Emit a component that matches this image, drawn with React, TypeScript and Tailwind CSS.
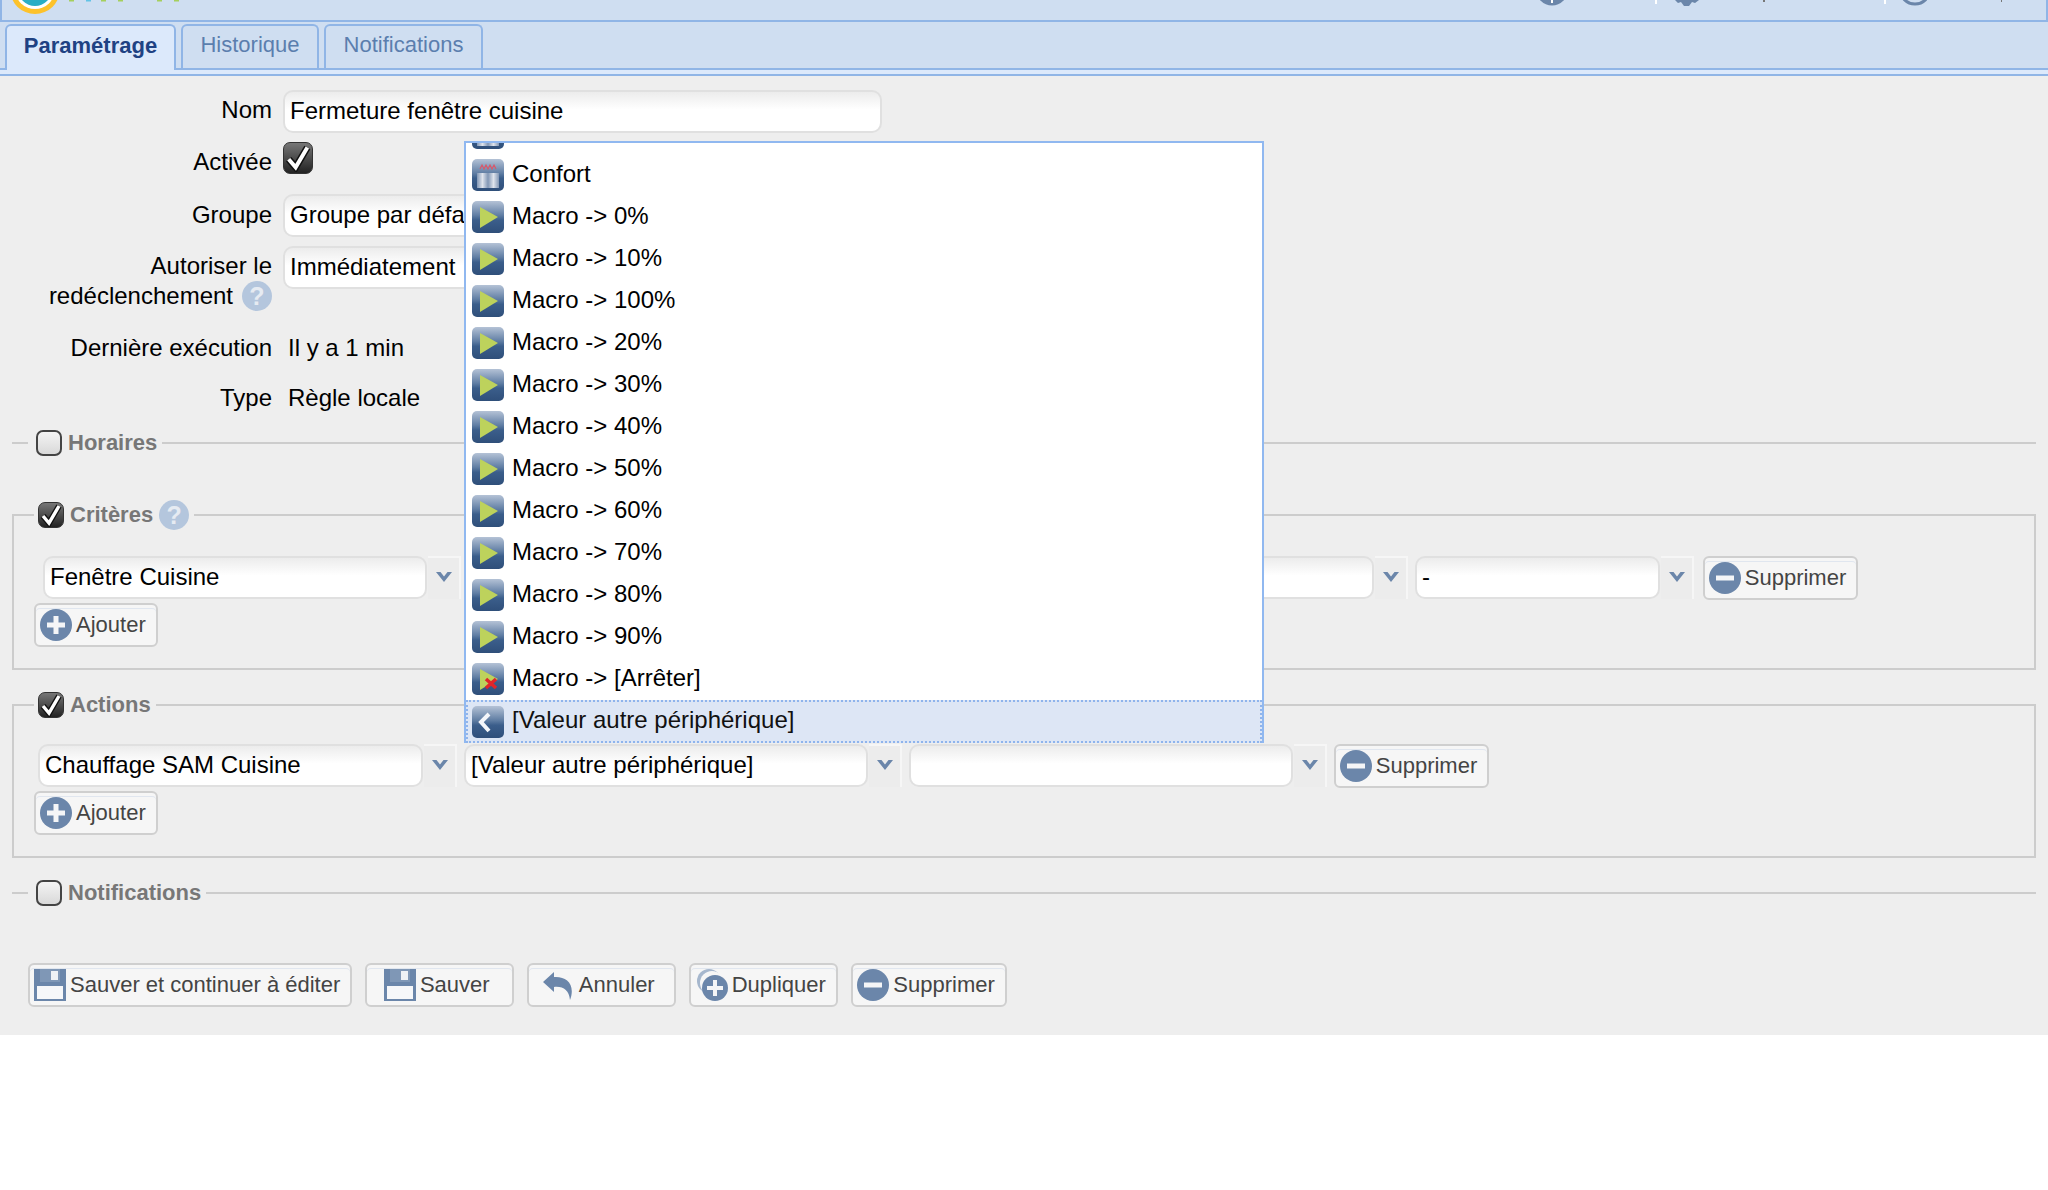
import { ReactNode, useId } from 'react';

const macroValues = ['0%', '10%', '100%', '20%', '30%', '40%', '50%', '60%', '70%', '80%', '90%'];

function TileIcon({ children }: { children?: ReactNode }) {
  const id = useId();
  return (
    <svg width="32" height="32" viewBox="0 0 32 32" className="shrink-0">
      <defs>
        <linearGradient id={id} x1="0" y1="0" x2="0" y2="1">
          <stop offset="0" stopColor="#b4c2d6" />
          <stop offset="0.45" stopColor="#5f7da3" />
          <stop offset="0.6" stopColor="#3b5e8b" />
          <stop offset="1" stopColor="#2f4f7a" />
        </linearGradient>
      </defs>
      <rect width="32" height="32" rx="5" fill={`url(#${id})`} />
      {children}
    </svg>
  );
}

function PlayIcon() {
  return (
    <TileIcon>
      <path d="M8 6 L26 16 L8 27 Z" fill="#bdd25c" />
    </TileIcon>
  );
}

function StopIcon() {
  return (
    <TileIcon>
      <path d="M8 6 L26 16 L8 27 Z" fill="#bdd25c" />
      <path d="M14 16 L24 25 M24 16 L14 25" stroke="#e0262a" strokeWidth="3.5" />
    </TileIcon>
  );
}

function BackIcon() {
  return (
    <TileIcon>
      <path d="M17 8 L9 16 L17 25" fill="none" stroke="#f4f6fa" strokeWidth="4" />
    </TileIcon>
  );
}

function ComfortIcon() {
  const id = useId();
  return (
    <TileIcon>
      <defs>
        <linearGradient id={id} x1="0" y1="0" x2="1" y2="0">
          <stop offset="0" stopColor="#8297b5" />
          <stop offset="0.25" stopColor="#dfe4ec" />
          <stop offset="0.5" stopColor="#8297b5" />
          <stop offset="0.75" stopColor="#dfe4ec" />
          <stop offset="1" stopColor="#8297b5" />
        </linearGradient>
      </defs>
      <path d="M8 10 L10 6 L12 10 L14 6 L16 10 L18 6 L20 10 L22 6 L24 10" fill="none" stroke="#d8586a" strokeWidth="1.2" />
      <rect x="5" y="14" width="22" height="15" fill={`url(#${id})`} />
    </TileIcon>
  );
}

function SaveIcon() {
  return (
    <svg width="32" height="32" viewBox="0 0 32 32" className="shrink-0">
      <rect width="32" height="32" fill="#6b86aa" />
      <rect x="6" y="0" width="20" height="13" fill="#7f97b6" />
      <rect x="17" y="2" width="7" height="9" fill="#eef1f5" />
      <rect x="3" y="17" width="26" height="13" fill="#f6f7f9" />
    </svg>
  );
}

function MinusIcon() {
  return (
    <svg width="32" height="32" viewBox="0 0 32 32" className="shrink-0">
      <circle cx="16" cy="16" r="16" fill="#6b86aa" />
      <rect x="7" y="13.5" width="18" height="5" fill="#f4f5f7" />
    </svg>
  );
}

function PlusIcon() {
  return (
    <svg width="32" height="32" viewBox="0 0 32 32" className="shrink-0">
      <circle cx="16" cy="16" r="16" fill="#6b86aa" />
      <path d="M16 7 V25 M7 16 H25" stroke="#f4f5f7" strokeWidth="5" />
    </svg>
  );
}

function UndoIcon() {
  return (
    <svg width="32" height="32" viewBox="0 0 32 32" className="shrink-0">
      <path d="M0 13 L11 3 L11 8 C23 7 33 15 27 31 C26 21 20 17 11 18 L11 23 Z" fill="#6b86aa" />
    </svg>
  );
}

function DuplicateIcon() {
  return (
    <svg width="32" height="32" viewBox="0 0 32 32" className="shrink-0">
      <circle cx="13" cy="12" r="12" fill="#a6b7cd" />
      <circle cx="16" cy="14" r="12" fill="#f6f6f6" />
      <circle cx="19" cy="19" r="13" fill="#6b86aa" />
      <path d="M19 11 V27 M11 19 H27" stroke="#f4f5f7" strokeWidth="4" />
    </svg>
  );
}

function Chevron() {
  return (
    <svg width="16" height="10" viewBox="0 0 16 10">
      <path d="M0 0 H4.5 L8 4.5 L11.5 0 H16 L8 10 Z" fill="#6b86aa" />
    </svg>
  );
}

function HelpIcon() {
  return (
    <span className="flex h-[30px] w-[30px] shrink-0 items-center justify-center rounded-full bg-[#b4c6dd] text-[25px] font-bold leading-none text-[#e6ebf2]">
      ?
    </span>
  );
}

function Checkbox({ checked, size = 26 }: { checked?: boolean; size?: number }) {
  if (!checked) {
    return (
      <span className="block h-[26px] w-[26px] shrink-0 rounded-[7px] border-2 border-[#444] bg-[linear-gradient(#f4f4f4,#d9d9d9)]" />
    );
  }
  return (
    <span
      className="flex shrink-0 items-center justify-center rounded-[7px] border border-[#333] bg-[linear-gradient(#777,#222)]"
      style={{ width: size, height: size + (size > 26 ? 2 : 0) }}
    >
      <svg width={size - 2} height={size - 2} viewBox="0 0 24 24">
        <path d="M4 13 L10 20 L20 3" fill="none" stroke="#111" strokeWidth="6" />
        <path d="M4 13 L10 20 L20 3" fill="none" stroke="#fff" strokeWidth="3.4" />
      </svg>
    </span>
  );
}

function Input({ value, width }: { value?: string; width: number }) {
  return (
    <div
      className="flex h-[43px] shrink-0 items-center overflow-hidden whitespace-nowrap rounded-[10px] border-2 border-[#e0e0e0] bg-[linear-gradient(#ececec,#ffffff_45%)] pb-[2px] pl-[5px] text-black"
      style={{ width }}
    >
      {value}
    </div>
  );
}

function Select({ value, width }: { value?: string; width: number }) {
  return (
    <div className="flex shrink-0">
      <Input value={value} width={width} />
      <div className="ml-px flex h-[43px] w-[33px] items-center justify-center border-t-2 border-r-2 border-[#f6f6f6] bg-[#ececec] pb-[4px]">
        <Chevron />
      </div>
    </div>
  );
}

function Button({ icon, label, className = '' }: { icon: ReactNode; label: string; className?: string }) {
  return (
    <button
      className={`flex h-[44px] min-w-[123px] shrink-0 items-center justify-center gap-[4px] rounded-[6px] border-2 border-[#cfcfcf] bg-[#f6f6f6] pl-[4px] pr-[10px] text-[22px] text-[#444] shadow-[inset_0_3px_0_#f6f6f6,inset_0_4px_0_#e0e6ef] ${className}`}
    >
      {icon}
      <span className="pb-[2px]">{label}</span>
    </button>
  );
}

function Legend({ children, className }: { children: ReactNode; className: string }) {
  return (
    <legend className={`flex items-center text-[22px] font-bold leading-none text-[#777] ${className}`}>{children}</legend>
  );
}

function FormRow({ label, children, className = '' }: { label: ReactNode; children: ReactNode; className?: string }) {
  return (
    <div className={`flex ${className}`}>
      <div className="w-[272px] shrink-0 text-right leading-[30px]">{label}</div>
      <div className="ml-[11px]">{children}</div>
    </div>
  );
}

function DropdownRow({ icon, label, selected }: { icon: ReactNode; label?: string; selected?: boolean }) {
  return (
    <div
      className={
        selected
          ? 'flex h-[43px] shrink-0 items-center gap-[8px] border-2 border-dotted border-[#8fb4ec] bg-[#dde6f5] pl-[4px] text-[#111]'
          : 'flex h-[42px] shrink-0 items-center gap-[8px] pl-[6px]'
      }
    >
      {icon}
      <span className="pb-[3px]">{label}</span>
    </div>
  );
}

export default function App() {
  return (
    <div className="relative min-h-[1190px] bg-white font-['Liberation_Sans',Arial,sans-serif] text-[24px] text-black">
      {/* bandeau du haut, coupé */}
      <div className="flex h-[22px] items-start justify-between overflow-hidden border-x-2 border-b-2 border-[#90b5e6] bg-[#cfdef1]">
        <svg width="200" height="20" viewBox="2 0 200 20">
          <circle cx="35" cy="-11" r="25" fill="#fdc22b" />
          <circle cx="35" cy="-11" r="20" fill="#fff" />
          <circle cx="35" cy="-11" r="17" fill="#2aaec4" />
          <rect x="69" y="0" width="5" height="1.5" fill="#a5cf5c" />
          <rect x="86" y="0" width="5" height="1.5" fill="#62c3e6" />
          <rect x="101" y="0" width="5" height="1.5" fill="#a5cf5c" />
          <rect x="118" y="0" width="5" height="1.5" fill="#a5cf5c" />
          <rect x="157" y="0" width="5" height="1.5" fill="#a5cf5c" />
          <rect x="174" y="0" width="5" height="1.5" fill="#a5cf5c" />
        </svg>
        <svg width="516" height="20" viewBox="1530 0 516 20">
          <circle cx="1552" cy="-10.5" r="16" fill="#6b86aa" />
          <rect x="1551" y="0" width="2" height="3" fill="#fff" />
          <rect x="1655" y="0" width="2" height="4" fill="#fff" />
          <path d="M1675 0 L1678 3 L1681 2 L1684 6 L1689 6 L1692 2 L1695 3 L1699 0 Z" fill="#6b86aa" />
          <rect x="1763" y="0" width="2" height="2" fill="#777" />
          <rect x="1884" y="0" width="2" height="4" fill="#fff" />
          <circle cx="1915" cy="-11" r="15" fill="none" stroke="#6b86aa" strokeWidth="3" />
          <rect x="2001" y="0" width="1" height="2" fill="#777" />
        </svg>
      </div>

      {/* onglets */}
      <div className="flex h-[48px] items-end border-b-2 border-[#90b5e6] bg-[#cfdef1] pl-[5px] text-[22px]">
        <div className="relative -mb-[2px] flex h-[46px] w-[171px] items-center justify-center rounded-t-[6px] border-2 border-b-0 border-[#90b5e6] bg-[#dce9fb] pb-[6px] font-bold text-[#1f4283]">
          Paramétrage
        </div>
        <div className="ml-[5px] flex h-[44px] w-[138px] items-center justify-center rounded-t-[6px] border-2 border-b-0 border-[#90b5e6] pb-[5px] text-[#5b7eae]">
          Historique
        </div>
        <div className="ml-[5px] flex h-[44px] w-[159px] items-center justify-center rounded-t-[6px] border-2 border-b-0 border-[#90b5e6] pb-[5px] text-[#5b7eae]">
          Notifications
        </div>
      </div>
      <div className="h-[6px] border-b-2 border-[#90b5e6] bg-[#dce9fb]" />

      {/* formulaire */}
      <div className="bg-[#eeeeee] pb-[28px] pt-[14px]">
        <FormRow label={<div className="pt-[5px]">Nom</div>}>
          <Input value="Fermeture fenêtre cuisine" width={599} />
        </FormRow>
        <FormRow label={<div className="pt-[5px]">Activée</div>} className="mt-[9px] h-[32px]">
          <Checkbox checked size={30} />
        </FormRow>
        <FormRow label={<div className="pt-[6px]">Groupe</div>} className="mt-[20px]">
          <Input value="Groupe par défaut" width={420} />
        </FormRow>
        <FormRow
          label={
            <div className="pt-[5px]">
              Autoriser le
              <div className="flex items-center justify-end gap-[9px]">
                redéclenchement <HelpIcon />
              </div>
            </div>
          }
          className="mt-[9px] h-[70px]"
        >
          <Input value="Immédiatement" width={420} />
        </FormRow>
        <FormRow label="Dernière exécution" className="mt-[17px]">
          <div className="pl-[5px] leading-[30px]">Il y a 1 min</div>
        </FormRow>
        <FormRow label="Type" className="mt-[20px]">
          <div className="pl-[5px] leading-[30px]">Règle locale</div>
        </FormRow>

        <fieldset className="mx-[12px] mt-[17px] border-t-2 border-[#cccccc]">
          <Legend className="ml-[16px] gap-[6px] pl-[8px] pr-[5px]">
            <Checkbox />
            Horaires
          </Legend>
        </fieldset>

        <fieldset className="mx-[12px] mt-[44px] border-2 border-[#cccccc] pb-[21px]">
          <Legend className="ml-[20px] gap-[6px] pl-[4px] pr-[5px]">
            <Checkbox checked />
            <span>Critères</span>
            <HelpIcon />
          </Legend>
          <div className="ml-[29px] mt-[26px] flex">
            <Select value="Fenêtre Cuisine" width={384} />
            <div className="ml-[6px]">
              <Select width={384} />
            </div>
            <div className="ml-[6px]">
              <Select width={483} />
            </div>
            <div className="ml-[7px]">
              <Select value="-" width={245} />
            </div>
            <Button icon={<MinusIcon />} label="Supprimer" className="ml-[9px] w-[155px]" />
          </div>
          <Button icon={<PlusIcon />} label="Ajouter" className="ml-[20px] mt-[3px]" />
        </fieldset>

        <fieldset className="mx-[12px] mt-[22px] border-2 border-[#cccccc] pb-[21px]">
          <Legend className="ml-[20px] gap-[6px] pl-[4px] pr-[5px]">
            <Checkbox checked />
            Actions
          </Legend>
          <div className="ml-[24px] mt-[26px] flex">
            <Select value="Chauffage SAM Cuisine" width={385} />
            <div className="ml-[7px]">
              <Select value="[Valeur autre périphérique]" width={404} />
            </div>
            <div className="ml-[7px]">
              <Select width={384} />
            </div>
            <Button icon={<MinusIcon />} label="Supprimer" className="ml-[7px] w-[155px]" />
          </div>
          <Button icon={<PlusIcon />} label="Ajouter" className="ml-[20px] mt-[3px]" />
        </fieldset>

        <fieldset className="mx-[12px] mt-[22px] border-t-2 border-[#cccccc]">
          <Legend className="ml-[16px] gap-[6px] pl-[8px] pr-[5px]">
            <Checkbox />
            Notifications
          </Legend>
        </fieldset>

        <div className="ml-[28px] mt-[57px] flex gap-[13px]">
          <Button icon={<SaveIcon />} label="Sauver et continuer à éditer" />
          <Button icon={<SaveIcon />} label="Sauver" className="w-[149px]" />
          <Button icon={<UndoIcon />} label="Annuler" className="w-[149px]" />
          <Button icon={<DuplicateIcon />} label="Dupliquer" className="w-[149px]" />
          <Button icon={<MinusIcon />} label="Supprimer" />
        </div>
      </div>

      {/* liste déroulante ouverte */}
      <div className="absolute left-[464px] top-[141px] flex h-[602px] w-[800px] flex-col overflow-hidden border-2 border-b-0 border-[#90b8f0] bg-white">
        <div className="-mt-[31px]">
          <DropdownRow icon={<ComfortIcon />} />
        </div>
        <DropdownRow icon={<ComfortIcon />} label="Confort" />
        {macroValues.map((v) => (
          <DropdownRow key={v} icon={<PlayIcon />} label={`Macro -> ${v}`} />
        ))}
        <DropdownRow icon={<StopIcon />} label="Macro -> [Arrêter]" />
        <DropdownRow icon={<BackIcon />} label="[Valeur autre périphérique]" selected />
      </div>
    </div>
  );
}
